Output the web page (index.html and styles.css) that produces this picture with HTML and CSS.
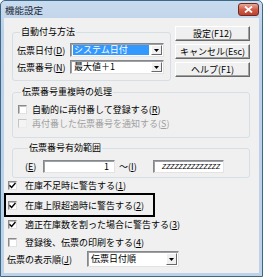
FILE: index.html
```html
<!DOCTYPE html>
<html lang="ja">
<head>
<meta charset="utf-8">
<link rel="stylesheet" href="styles.css">
</head>
<body>
<div class="window">
  <div class="titlebar">
    <span class="title">機能設定</span>
    <span class="close"><svg width="9" height="7" viewBox="0 0 9 7"><path d="M1 0.5 L8 6.5 M8 0.5 L1 6.5" stroke="#fff" stroke-width="1.8"/></svg></span>
  </div>
  <div class="client">
    <div class="top">
      <fieldset class="group g1">
        <legend>自動付与方法</legend>
        <div class="frow">
          <span class="lbl">伝票日付(<u>D</u>)</span>
          <div class="combo"><span class="val"><span class="sel">システム日付</span></span><span class="drop"><svg width="5" height="3" viewBox="0 0 5 3"><path d="M0 0h5L2.5 3z" fill="#000"/></svg></span></div>
        </div>
        <div class="frow">
          <span class="lbl">伝票番号(<u>N</u>)</span>
          <div class="combo"><span class="val">最大値＋1</span><span class="drop"><svg width="5" height="3" viewBox="0 0 5 3"><path d="M0 0h5L2.5 3z" fill="#000"/></svg></span></div>
        </div>
      </fieldset>
      <div class="buttons">
        <div class="btn">設定(F12)</div>
        <div class="btn">キャンセル(Esc)</div>
        <div class="btn">ヘルプ(F1)</div>
      </div>
    </div>

    <fieldset class="group g2">
      <legend>伝票番号重複時の処理</legend>
      <div class="cb"><span class="box"></span><span>自動的に再付番して登録する(<u>R</u>)</span></div>
      <div class="cb disabled"><span class="box"></span><span>再付番した伝票番号を通知する(<u>S</u>)</span></div>
    </fieldset>

    <fieldset class="group g3">
      <legend>伝票番号有効範囲</legend>
      <div class="range">
        <span class="rl1">(<u>E</u>)</span>
        <span class="field f1">1</span>
        <span class="rl2">～(<u>I</u>)</span>
        <span class="field f2">ZZZZZZZZZZZZZZ</span>
      </div>
    </fieldset>

    <div class="cb outer r1"><span class="box checked"><svg width="7" height="7" viewBox="0 0 7 7"><path d="M0.5 3.2 L2.6 5.4 L6.5 1" fill="none" stroke="#000" stroke-width="1.4"/></svg></span><span>在庫不足時に警告する(<u>1</u>)</span></div>
    <div class="focusbox">
      <div class="cb"><span class="box checked"><svg width="7" height="7" viewBox="0 0 7 7"><path d="M0.5 3.2 L2.6 5.4 L6.5 1" fill="none" stroke="#000" stroke-width="1.4"/></svg></span><span>在庫上限超過時に警告する(<u>2</u>)</span></div>
    </div>
    <div class="cb outer r3"><span class="box checked"><svg width="7" height="7" viewBox="0 0 7 7"><path d="M0.5 3.2 L2.6 5.4 L6.5 1" fill="none" stroke="#000" stroke-width="1.4"/></svg></span><span>適正在庫数を割った場合に警告する(<u>3</u>)</span></div>
    <div class="cb outer r4"><span class="box"></span><span>登録後、伝票の印刷をする(<u>4</u>)</span></div>

    <div class="orderrow">
      <span class="olbl">伝票の表示順(<u>J</u>)</span>
      <div class="combo c3"><span class="val">伝票日付順</span><span class="drop"><svg width="5" height="3" viewBox="0 0 5 3"><path d="M0 0h5L2.5 3z" fill="#000"/></svg></span></div>
    </div>
  </div>
</div>
</body>
</html>
```

FILE: styles.css
```css
* { box-sizing: border-box; }
body {
  margin: 0;
  background: #ffffff;
  font-family: "Noto Sans CJK JP", "Noto Sans", sans-serif;
  font-size: 9px;
  color: #000;
}
u { text-decoration: underline; text-underline-offset: 1px; }

.window {
  width: 263px;
  height: 277px;
  border: 1px solid #3a6a88;
  border-radius: 5px 5px 0 0;
  background: linear-gradient(#c9dbee, #bcd1e8 30px, #bed2e8);
  padding: 0 3px 3px;
  display: flex;
  flex-direction: column;
}
.titlebar {
  height: 17px;
  display: flex;
  align-items: center;
  justify-content: space-between;
}
.title {
  font-size: 9.5px;
  line-height: 12px;
  color: #1b2a3a;
  margin-left: 1px;
}
.close {
  width: 21px;
  height: 13px;
  border: 1px solid #6e2a20;
  border-radius: 3px;
  background: linear-gradient(#e8a898, #cf5e48 50%, #c04030);
  display: flex;
  align-items: center;
  justify-content: center;
}
.client {
  flex: 1;
  background: #f0f0f0;
  padding: 8px 0 0 8px;
  display: flex;
  flex-direction: column;
}

.top { display: flex; align-items: flex-start; }

.group {
  margin: 0;
  border: 1px solid #d5dfe5;
  border-radius: 3px;
  min-width: 0;
}
legend {
  margin-left: 3px;
  padding: 0 1px;
  line-height: 12px;
  height: 12px;
}

.g1 {
  width: 159px;
  padding: 5px 6px 6px 4px;
}
.frow {
  display: flex;
  align-items: center;
  height: 14px;
}
.frow + .frow { margin-top: 3px; }
.lbl { width: 53px; white-space: nowrap; }

.combo {
  width: 94px;
  height: 14px;
  background: #fff;
  border: 1px solid;
  border-color: #828790 #e3e3e3 #e3e3e3 #828790;
  box-shadow: inset 1px 1px #a0a0a0;
  display: flex;
  align-items: stretch;
  padding: 1px 1px 1px 2px;
}
.val {
  flex: 1;
  display: flex;
  align-items: center;
  line-height: 10px;
  white-space: nowrap;
  padding-left: 1px;
}
.sel {
  background: #3399ff;
  color: #fff;
  flex: 1;
  height: 10px;
  margin-right: 2px;
  margin-left: -1px;
  padding-left: 1px;
  line-height: 10px;
}
.drop {
  width: 11px;
  background: #f0f0f0;
  border: 1px solid;
  border-color: #fff #696969 #696969 #fff;
  display: flex;
  align-items: center;
  justify-content: center;
}

.buttons {
  margin-left: 4px;
  display: flex;
  flex-direction: column;
  gap: 3px;
}
.btn {
  width: 75px;
  height: 15px;
  border: 1px solid;
  border-color: #fff #696969 #696969 #fff;
  box-shadow: inset -1px -1px #a0a0a0;
  background: #f0f0f0;
  text-align: center;
  line-height: 13px;
  white-space: nowrap;
}

.g2 {
  width: 238px;
  margin-top: 5px;
  padding: 4px 0 7px 5px;
}
.cb {
  display: flex;
  align-items: center;
  height: 14px;
  white-space: nowrap;
}
.box {
  width: 9px;
  height: 9px;
  background: #fff;
  border: 1px solid;
  border-color: #8a8a8a #e0e0e0 #e0e0e0 #8a8a8a;
  box-shadow: inset 1px 1px #c0c0c0;
  margin-right: 5px;
  display: flex;
  align-items: center;
  justify-content: center;
  flex: none;
}
.cb.disabled { color: #a0a0a0; }
.cb.disabled .box {
  background: #f4f4f4;
  border-color: #c4c4c4 #ececec #ececec #c4c4c4;
  box-shadow: none;
}

.g3 {
  width: 238px;
  margin-top: 4px;
  padding: 6px 0 4px 12px;
}
.range {
  display: flex;
  align-items: center;
  height: 13px;
}
.rl1 { width: 18px; }
.rl2 { width: 38px; padding-left: 4px; }
.field {
  height: 13px;
  background: #fff;
  border: 1px solid;
  border-color: #828790 #e3e3e3 #e3e3e3 #828790;
  box-shadow: inset 1px 1px #a0a0a0;
  line-height: 11px;
  white-space: nowrap;
  overflow: hidden;
}
.f1 { width: 72px; text-align: right; padding-right: 5px; }
.f2 {
  width: 71px;
  padding-left: 8px;
  font-family: "Liberation Sans", sans-serif;
  font-size: 6.8px;
  font-style: italic;
}

.cb.outer { margin-left: -4px; }
.cb.outer .box { margin-right: 8px; }
.r1 { height: 15px; }
.focusbox {
  margin: 0 0 0 -8px;
  width: 151px;
  height: 24px;
  border: 2px solid #000;
  display: flex;
  align-items: center;
  padding-left: 2px;
}
.focusbox .box { margin-right: 8px; }
.r4 { margin-top: 4px; }

.orderrow {
  margin: 2px 0 0 -5px;
  display: flex;
  align-items: center;
  height: 16px;
}
.olbl { width: 80px; white-space: nowrap; }
.c3 { width: 92px; height: 16px; }
```
